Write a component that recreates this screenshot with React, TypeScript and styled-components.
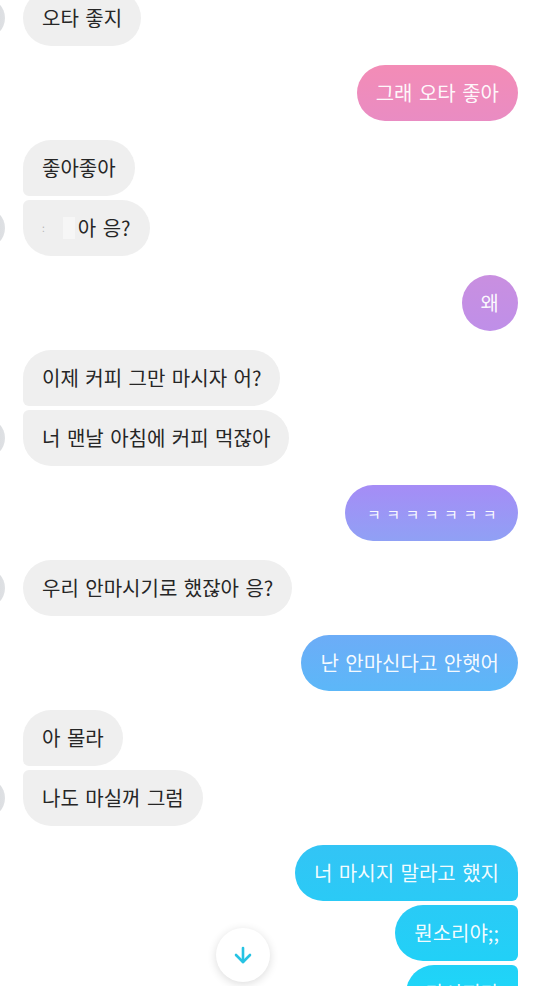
import styled, { createGlobalStyle, css } from 'styled-components'
import { ArrowDown } from 'lucide-react'

const GlobalStyle = createGlobalStyle`
  html, body {
    margin: 0;
    padding: 0;
    background: #ffffff;
    overflow: hidden;
  }
  body {
    font-family: "Noto Sans CJK KR", "Noto Sans", sans-serif;
  }
`

type Side = 'in' | 'out'
type Pos = 'single' | 'first' | 'middle' | 'last'

const Thread = styled.div`
  display: flex;
  flex-direction: column;
  gap: 19px;
  margin-top: -10px;
  padding: 0 36px 0 0;
`

const Group = styled.div<{ $side: Side }>`
  display: flex;
  align-items: flex-end;
  justify-content: ${p => (p.$side === 'in' ? 'flex-start' : 'flex-end')};
  gap: 18px;
`

const Avatar = styled.div`
  flex-shrink: 0;
  width: 40px;
  height: 40px;
  margin-left: -35px;
  margin-bottom: 8px;
  border-radius: 50%;
  background: linear-gradient(90deg, #c9ccd1, #dfe1e4);
`

const Stack = styled.div<{ $side: Side }>`
  display: flex;
  flex-direction: column;
  align-items: ${p => (p.$side === 'in' ? 'flex-start' : 'flex-end')};
  gap: 4px;
`

const big = 28
const small = 6

const corners = (side: Side, pos: Pos) => {
  const tight = {
    single: [false, false],
    first: [false, true],
    middle: [true, true],
    last: [true, false],
  }[pos]
  const top = tight[0] ? small : big
  const bottom = tight[1] ? small : big
  return side === 'in'
    ? `${top}px ${big}px ${big}px ${bottom}px`
    : `${big}px ${top}px ${bottom}px ${big}px`
}

const Bubble = styled.div<{ $side: Side; $pos: Pos }>`
  box-sizing: border-box;
  min-width: 55px;
  height: 56px;
  padding: 0 19px;
  display: flex;
  align-items: center;
  justify-content: center;
  font-size: 20px;
  line-height: 1;
  word-spacing: 2px;
  white-space: nowrap;
  border-radius: ${p => corners(p.$side, p.$pos)};

  ${p =>
    p.$side === 'in'
      ? css`
          background: #efefef;
          color: #262626;
        `
      : css`
          color: rgba(255, 255, 255, 0.94);
          background-image: linear-gradient(
            180deg,
            #f68cb2 0px,
            #f38cb6 65px,
            #e98cc3 122px,
            #c98fe0 275px,
            #bf8fe8 330px,
            #a68cf6 484px,
            #90a0f5 540px,
            #6dacf7 633px,
            #5cb7f8 690px,
            #33c4f5 843px,
            #22d0f7 958px,
            #1fd5f8 986px
          );
          background-attachment: fixed;
        `}
`

const Laughs = styled.span`
  font-size: 15px;
  letter-spacing: 5.5px;
  margin: 0 -3px 0 3px;
`

const Hidden = styled.span`
  display: inline-flex;
  align-items: center;
  gap: 18px;
  margin-right: 3px;
  color: #b5b5b5;
  font-size: 10px;

  i {
    display: block;
    width: 12px;
    height: 22px;
    background: #f6f6f6;
  }
`

const ScrollButton = styled.button`
  position: absolute;
  left: 216px;
  top: 928px;
  width: 54px;
  height: 54px;
  padding: 0;
  border: none;
  border-radius: 50%;
  background: #ffffff;
  box-shadow: 0 2px 10px rgba(0, 0, 0, 0.14);
  display: flex;
  align-items: center;
  justify-content: center;
  color: #26c3e3;
`

type Msg = { text: React.ReactNode }
type Turn = { side: Side; msgs: Msg[] }

const turns: Turn[] = [
  { side: 'in', msgs: [{ text: '오타 좋지' }] },
  { side: 'out', msgs: [{ text: '그래 오타 좋아' }] },
  {
    side: 'in',
    msgs: [
      { text: '좋아좋아' },
      {
        text: (
          <>
            <Hidden>
              :<i />
            </Hidden>
            아 응?
          </>
        ),
      },
    ],
  },
  { side: 'out', msgs: [{ text: '왜' }] },
  { side: 'in', msgs: [{ text: '이제 커피 그만 마시자 어?' }, { text: '너 맨날 아침에 커피 먹잖아' }] },
  { side: 'out', msgs: [{ text: <Laughs>ㅋㅋㅋㅋㅋㅋㅋ</Laughs> }] },
  { side: 'in', msgs: [{ text: '우리 안마시기로 했잖아 응?' }] },
  { side: 'out', msgs: [{ text: '난 안마신다고 안햇어' }] },
  { side: 'in', msgs: [{ text: '아 몰라' }, { text: '나도 마실꺼 그럼' }] },
  { side: 'out', msgs: [{ text: '너 마시지 말라고 했지' }, { text: '뭔소리야;;' }, { text: '마시지마' }] },
]

const posOf = (i: number, n: number): Pos => {
  if (n === 1) return 'single'
  if (i === 0) return 'first'
  if (i === n - 1) return 'last'
  return 'middle'
}

export default function App() {
  return (
    <>
      <GlobalStyle />
      <Thread>
        {turns.map((turn, t) => (
          <Group key={t} $side={turn.side}>
            {turn.side === 'in' && <Avatar />}
            <Stack $side={turn.side}>
              {turn.msgs.map((m, i) => (
                <Bubble key={i} $side={turn.side} $pos={posOf(i, turn.msgs.length)}>
                  {m.text}
                </Bubble>
              ))}
            </Stack>
          </Group>
        ))}
      </Thread>
      <ScrollButton aria-label="scroll down">
        <ArrowDown size={24} strokeWidth={2.6} />
      </ScrollButton>
    </>
  )
}
